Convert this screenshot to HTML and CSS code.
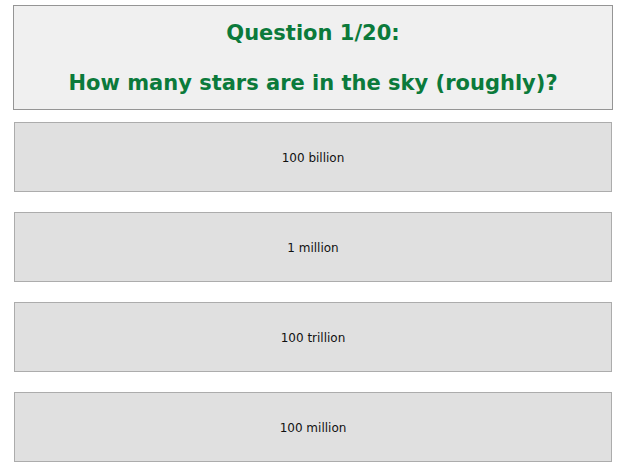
FILE: index.html
```html
<!DOCTYPE html>
<html>
<head>
<meta charset="utf-8">
<link rel="stylesheet" href="styles.css">
</head>
<body>
<div class="quiz">
  <div class="question">
    <div class="q-line">Question 1/20:</div>
    <div class="q-line q-text">How many stars are in the sky (roughly)?</div>
  </div>
  <div class="answers">
    <div class="answer">100 billion</div>
    <div class="answer">1 million</div>
    <div class="answer">100 trillion</div>
    <div class="answer">100 million</div>
  </div>
</div>
</body>
</html>
```
FILE: styles.css
```css
html, body {
  margin: 0;
  padding: 0;
  background: #ffffff;
}
body {
  font-family: "DejaVu Sans", Verdana, sans-serif;
}
.quiz {
  padding: 5px 0 0 13px;
  width: 600px;
}
.question {
  box-sizing: border-box;
  width: 600px;
  height: 105px;
  border: 1px solid #959595;
  background: #f0f0f0;
  display: flex;
  flex-direction: column;
  align-items: center;
  padding-top: 15px;
  gap: 25px;
}
.q-line {
  color: #0b7a3b;
  font-weight: bold;
  font-size: 21px;
  line-height: 25px;
}
.answers {
  display: flex;
  flex-direction: column;
  gap: 20px;
  margin: 12px 1px 0 1px;
}
.answer {
  box-sizing: border-box;
  height: 70px;
  padding-top: 2px;
  border: 1px solid #acacac;
  background: #e0e0e0;
  display: flex;
  align-items: center;
  justify-content: center;
  font-size: 12px;
  color: #111;
}
```
